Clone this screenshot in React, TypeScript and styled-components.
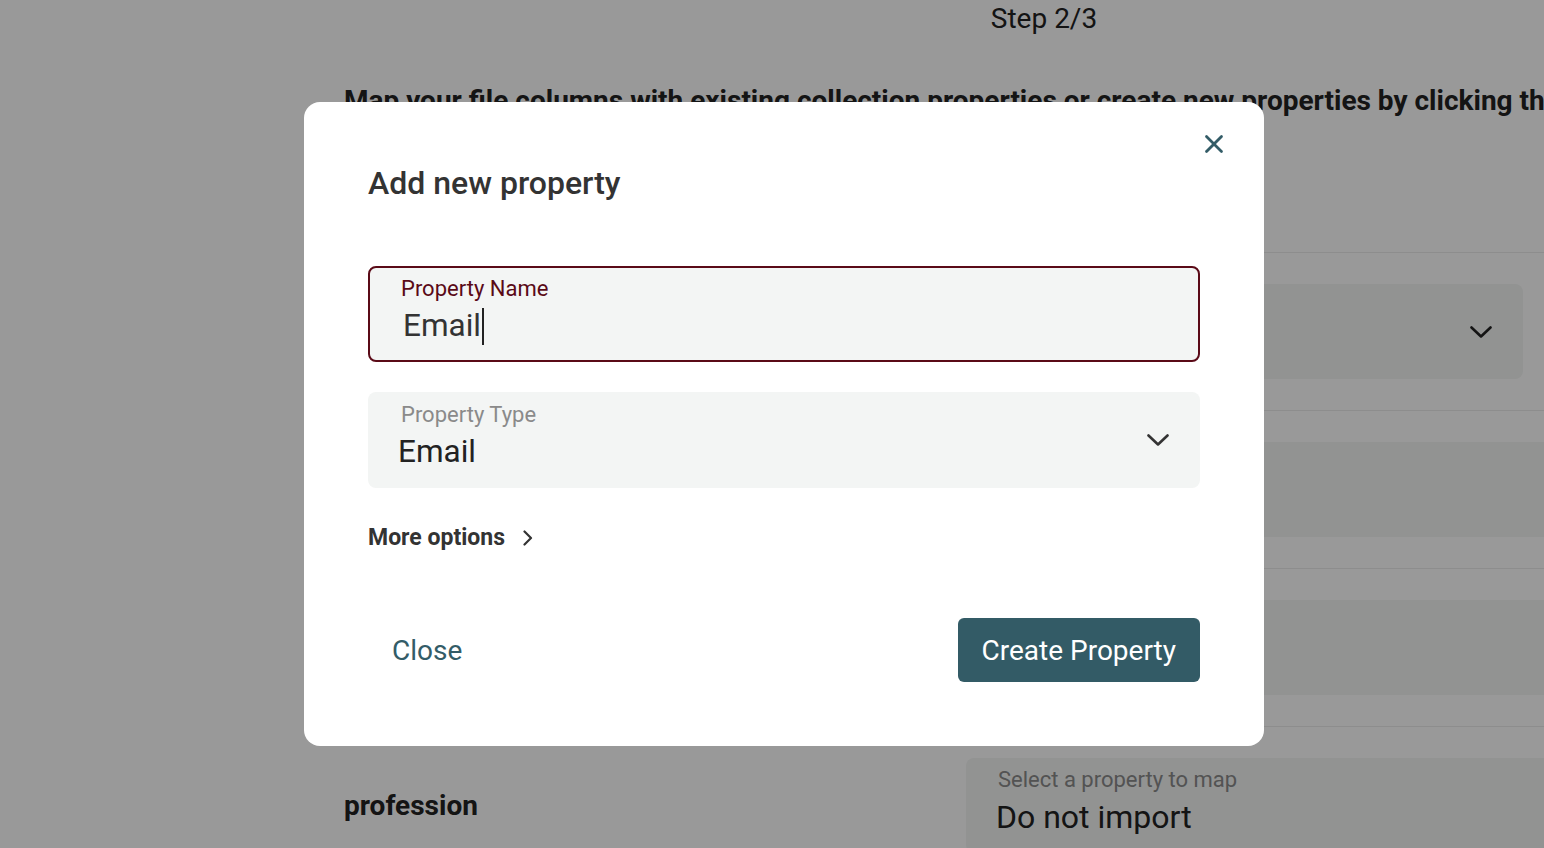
import React from "react";
import styled, { createGlobalStyle } from "styled-components";
import { X } from "lucide-react";

const GlobalStyle = createGlobalStyle`
  html, body {
    margin: 0;
    padding: 0;
    background: #fff;
    overflow: hidden;
    font-family: Roboto, "Liberation Sans", Arial, sans-serif;
  }
`;

// Chevrons drawn to match the thin, wide strokes of the reference
const ChevronDown = ({ color = "#333" }: { color?: string }) => (
  <svg width="22" height="12" viewBox="0 0 22 12" fill="none">
    <path d="M1.5 1.5 L11 10.5 L20.5 1.5" stroke={color} strokeWidth="2.6" strokeLinecap="round" strokeLinejoin="round" />
  </svg>
);

const ChevronRight = ({ color = "#333" }: { color?: string }) => (
  <svg width="10" height="16" viewBox="0 0 10 16" fill="none">
    <path d="M1.5 1.5 L8 8 L1.5 14.5" stroke={color} strokeWidth="2.2" strokeLinecap="round" strokeLinejoin="round" />
  </svg>
);

// Background page: the mapping step behind the dialog
const Page = styled.div`
  width: 1400px;
  margin-left: 344px;
  color: #222;
`;

const StepLabel = styled.div`
  text-align: center;
  font-size: 28px;
  line-height: 32px;
  padding-top: 3px;
`;

const Intro = styled.h2`
  margin: 48px 0 0;
  font-size: 28px;
  line-height: 36px;
  font-weight: 700;
  white-space: nowrap;
`;

const Rows = styled.div`
  margin-top: 133px;
`;

const MapRow = styled.div`
  display: grid;
  grid-template-columns: 622px 1fr;
  align-items: center;
  border-top: 1px solid #ececec;
  padding: 31px 0;
`;

const ColumnName = styled.div`
  font-size: 28px;
  line-height: 34px;
  font-weight: 700;
`;

const PageSelect = styled.div<{ $narrow?: boolean }>`
  width: ${(p) => (p.$narrow ? "557px" : "100%")};
  height: 95px;
  box-sizing: border-box;
  background: #f3f5f4;
  border-radius: 8px;
  padding: 0 31px 0 32px;
  display: flex;
  align-items: center;
  justify-content: space-between;
`;

const PageSelectText = styled.div`
  align-self: flex-start;
  padding-top: 9px;
  display: flex;
  flex-direction: column;
  gap: 5px;
`;

const PageSelectLabel = styled.span`
  font-size: 22px;
  line-height: 26px;
  color: #8a8a8a;
`;

const PageSelectValue = styled.span`
  font-size: 32px;
  line-height: 38px;
  margin-left: -2px;
  color: #222;
`;

// Dialog
const Overlay = styled.div`
  position: fixed;
  inset: 0;
  background: rgba(0, 0, 0, 0.4);
  display: flex;
  align-items: center;
  justify-content: center;
  padding-left: 24px;
`;

const Dialog = styled.div`
  position: relative;
  width: 960px;
  height: 644px;
  box-sizing: border-box;
  background: #fff;
  border-radius: 16px;
  padding: 62px 64px 64px;
  display: flex;
  flex-direction: column;
`;

const CloseIcon = styled.button`
  position: absolute;
  top: 26px;
  right: 34px;
  width: 32px;
  height: 32px;
  padding: 0;
  border: none;
  background: none;
  color: #335c67;
  display: flex;
  align-items: center;
  justify-content: center;
  cursor: pointer;
`;

const Title = styled.h1`
  margin: 0;
  font-size: 32px;
  line-height: 38px;
  font-weight: 500;
  color: #333;
`;

const Fields = styled.div`
  margin-top: 64px;
  display: flex;
  flex-direction: column;
  gap: 30px;
`;

const Field = styled.div<{ $focused?: boolean }>`
  height: 96px;
  box-sizing: border-box;
  background: #f3f5f4;
  border-radius: 8px;
  border: 2px solid ${(p) => (p.$focused ? "#5a0a17" : "transparent")};
  padding: 0 29px 0 31px;
  display: flex;
  align-items: center;
  justify-content: space-between;
`;

const FieldText = styled.div`
  align-self: flex-start;
  padding-top: 8px;
  display: flex;
  flex-direction: column;
  gap: 5px;
`;

const FieldLabel = styled.span<{ $focused?: boolean }>`
  font-size: 22px;
  line-height: 26px;
  color: ${(p) => (p.$focused ? "#5a0a17" : "#8a8a8a")};
`;

const FieldValue = styled.span<{ $input?: boolean }>`
  font-size: 31.5px;
  line-height: 38px;
  margin-left: ${(p) => (p.$input ? "2px" : "-3px")};
  color: ${(p) => (p.$input ? "#333" : "#222")};
  display: flex;
  align-items: center;
`;

const Caret = styled.span`
  display: inline-block;
  width: 2px;
  height: 37px;
  background: #222;
  margin-left: 1px;
`;

const MoreOptions = styled.button`
  margin-top: 36px;
  align-self: flex-start;
  padding: 0;
  border: none;
  background: none;
  display: flex;
  align-items: center;
  gap: 18px;
  font-family: inherit;
  font-size: 23px;
  line-height: 28px;
  font-weight: 700;
  color: #333;
  cursor: pointer;
`;

const Actions = styled.div`
  margin-top: auto;
  display: flex;
  justify-content: space-between;
  align-items: center;
`;

const TextButton = styled.button`
  height: 64px;
  padding: 0 24px;
  border: none;
  background: none;
  font-family: inherit;
  font-size: 28px;
  color: #335c67;
  cursor: pointer;
`;

const PrimaryButton = styled.button`
  height: 64px;
  padding: 0 24px;
  border: none;
  border-radius: 6px;
  background: #335b66;
  font-family: inherit;
  font-size: 28px;
  color: #fff;
  cursor: pointer;
`;

// Rows hidden behind the dialog: only their selects peek out on the right
const hiddenRows = [{ id: 1, narrow: true }, { id: 2, narrow: false }, { id: 3, narrow: false }];

export default function App() {
  return (
    <>
      <GlobalStyle />
      <Page>
        <StepLabel>Step 2/3</StepLabel>
        <Intro>
          Map your file columns with existing collection properties or create new properties by clicking the button
        </Intro>
        <Rows>
          {hiddenRows.map((r) => (
            <MapRow key={r.id}>
              <ColumnName />
              <PageSelect $narrow={r.narrow}>
                <PageSelectText />
                {r.narrow && <ChevronDown color="#222" />}
              </PageSelect>
            </MapRow>
          ))}
          <MapRow>
            <ColumnName>profession</ColumnName>
            <PageSelect>
              <PageSelectText>
                <PageSelectLabel>Select a property to map</PageSelectLabel>
                <PageSelectValue>Do not import</PageSelectValue>
              </PageSelectText>
            </PageSelect>
          </MapRow>
        </Rows>
      </Page>

      <Overlay>
        <Dialog>
          <CloseIcon aria-label="Close dialog">
            <X size={30} strokeWidth={2.2} />
          </CloseIcon>
          <Title>Add new property</Title>
          <Fields>
            <Field $focused>
              <FieldText>
                <FieldLabel $focused>Property Name</FieldLabel>
                <FieldValue $input>
                  Email
                  <Caret />
                </FieldValue>
              </FieldText>
            </Field>
            <Field>
              <FieldText>
                <FieldLabel>Property Type</FieldLabel>
                <FieldValue>Email</FieldValue>
              </FieldText>
              <ChevronDown />
            </Field>
          </Fields>
          <MoreOptions>
            More options
            <ChevronRight />
          </MoreOptions>
          <Actions>
            <TextButton>Close</TextButton>
            <PrimaryButton>Create Property</PrimaryButton>
          </Actions>
        </Dialog>
      </Overlay>
    </>
  );
}
